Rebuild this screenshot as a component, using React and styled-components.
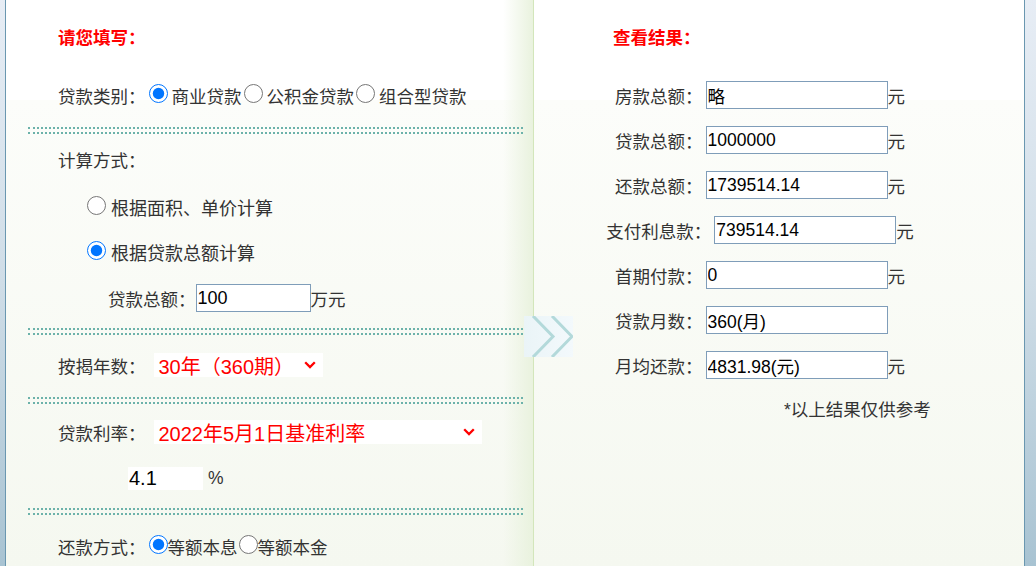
import React from "react";
import styled, { createGlobalStyle } from "styled-components";

const GlobalStyle = createGlobalStyle`
  * { box-sizing: border-box; }
  html, body { margin: 0; padding: 0; background: #fff; }
`;

const Page = styled.div`
  position: relative;
  display: flex;
  width: 1036px;
  height: 566px;
  overflow: hidden;
  background: linear-gradient(to bottom, #ffffff 0, #ffffff 100px, #fcfdfa 100px, #f5f8f0 100%);
  font-family: "Liberation Sans", "Noto Sans CJK SC", sans-serif;
  font-size: 17.5px;
  color: #333;
`;

const Edge = styled.div`
  flex: 0 0 ${(p) => p.$w}px;
  background: linear-gradient(to bottom, #e7edf5 0%, #cfdde7 50%, #a8c3d2 100%);
  border-${(p) => (p.$side === "left" ? "right" : "left")}: 1px solid #6a97b0;
`;

const LeftPanel = styled.div`
  flex: 0 0 528px;
  display: flex;
  flex-direction: column;
  padding-top: 23px;
  border-right: 1px solid #d3e6bb;
  background: linear-gradient(to right, rgba(236, 244, 226, 0) calc(100% - 30px), #e9f2de 100%);
`;

const RightPanel = styled.div`
  flex: 1;
  display: flex;
  flex-direction: column;
  padding-top: 23px;
`;

const Heading = styled.div`
  height: 31px;
  line-height: 31px;
  padding-left: ${(p) => p.$indent}px;
  color: #ff0000;
  font-weight: bold;
`;

const Row = styled.div`
  display: flex;
  align-items: center;
  height: ${(p) => p.$h || 30}px;
  margin-top: ${(p) => p.$mt || 0}px;
  padding-left: ${(p) => p.$indent}px;
  white-space: nowrap;
`;

const Divider = styled.div`
  margin: ${(p) => p.$mt}px 10px 0 22px;
  height: 7px;
  border-top: 2px dotted #6cb2aa;
  border-bottom: 2px dotted #6cb2aa;
`;

const Radio = styled.input.attrs({ type: "radio" })`
  width: 19px;
  height: 19px;
  margin: 0 0 4px ${(p) => p.$ml ?? 3}px;
  flex: 0 0 auto;
  accent-color: #0075ff;
`;

const OptionText = styled.span`
  margin-left: ${(p) => p.$gap || 0}px;
  font-size: ${(p) => p.$size || 17.5}px;
`;

const TextInput = styled.input.attrs({ type: "text", readOnly: true })`
  width: ${(p) => p.$w}px;
  height: ${(p) => p.$h || 28}px;
  margin-left: ${(p) => p.$ml || 0}px;
  padding: 0 0 0 1px;
  border: ${(p) => (p.$plain ? "none" : "1px solid #7f9db9")};
  background: #fff;
  font-family: "Liberation Sans", "Noto Sans CJK SC", sans-serif;
  font-size: ${(p) => p.$size || 17.5}px;
  color: #000;
  outline: none;
`;

const Unit = styled.span`
  margin-left: ${(p) => p.$ml || 0}px;
  visibility: ${(p) => (p.$hidden ? "hidden" : "visible")};
`;

const Select = styled.div`
  display: flex;
  align-items: center;
  justify-content: space-between;
  width: ${(p) => p.$w}px;
  height: 24px;
  margin-left: 8px;
  padding: 0 7px 0 5px;
  background: #fff;
  color: #ff0000;
  font-size: 20px;
`;

const Chevron = () => (
  <svg width="12" height="8" viewBox="0 0 12 8">
    <polyline points="1.2,1.2 6,6 10.8,1.2" fill="none" stroke="#ff0000" strokeWidth="2.3" />
  </svg>
);

const ResultList = styled.div`
  display: flex;
  flex-direction: column;
  gap: 17px;
  width: 452px;
  margin-top: 27px;
`;

const ResultRow = styled.div`
  display: flex;
  align-items: center;
  justify-content: center;
  height: 28px;
  white-space: nowrap;
`;

const Note = styled.div`
  height: 30px;
  line-height: 30px;
  margin-top: 16px;
  padding-left: 250px;
`;

const Arrow = styled.div`
  position: absolute;
  left: 524px;
  top: 316px;
  width: 49px;
  height: 41px;
  background: linear-gradient(to right, #eaf4f7, #f3f9fc);
  z-index: 2;
`;

const results = [
  { label: "房款总额：", value: "略" },
  { label: "贷款总额：", value: "1000000" },
  { label: "还款总额：", value: "1739514.14" },
  { label: "支付利息款：", value: "739514.14" },
  { label: "首期付款：", value: "0" },
  { label: "贷款月数：", value: "360(月)", noUnit: true },
  { label: "月均还款：", value: "4831.98(元)" },
];

export default function App() {
  return (
    <>
      <GlobalStyle />
      <Page>
        <Edge $side="left" $w={6} />
        <LeftPanel>
          <Heading $indent={52}>请您填写：</Heading>
          <Row $mt={26} $indent={52}>
            贷款类别：
            <Radio name="type" defaultChecked />
            <OptionText $gap={4}>商业贷款</OptionText>
            <Radio name="type" $ml={2} />
            <OptionText $gap={4}>公积金贷款</OptionText>
            <Radio name="type" $ml={2} />
            <OptionText $gap={4}>组合型贷款</OptionText>
          </Row>
          <Divider $mt={17} />
          <Row $mt={10} $indent={52}>计算方式：</Row>
          <Row $mt={18} $indent={81}>
            <Radio name="calc" $ml={0} />
            <OptionText $gap={5} $size={18}>根据面积、单价计算</OptionText>
          </Row>
          <Row $mt={15} $indent={81}>
            <Radio name="calc" $ml={0} defaultChecked />
            <OptionText $gap={5} $size={18}>根据贷款总额计算</OptionText>
          </Row>
          <Row $mt={17} $h={28} $indent={102}>
            贷款总额：
            <TextInput $w={115} $size={18} defaultValue="100" />
            万元
          </Row>
          <Divider $mt={16} />
          <Row $mt={15} $indent={52}>
            按揭年数：
            <Select $w={169}>
              <span>30年（360期）</span>
              <Chevron />
            </Select>
          </Row>
          <Divider $mt={17} />
          <Row $mt={13} $indent={52}>
            贷款利率：
            <Select $w={328}>
              <span>2022年5月1日基准利率</span>
              <Chevron />
            </Select>
          </Row>
          <Row $mt={16} $indent={122}>
            <TextInput $plain $w={75} $h={23} $size={20} defaultValue="4.1" />
            <Unit $ml={5}>%</Unit>
          </Row>
          <Divider $mt={15} />
          <Row $mt={16} $indent={52}>
            还款方式：
            <Radio name="pay" defaultChecked />
            <OptionText>等额本息</OptionText>
            <Radio name="pay" $ml={1} />
            <OptionText>等额本金</OptionText>
          </Row>
        </LeftPanel>
        <RightPanel>
          <Heading $indent={79}>查看结果：</Heading>
          <ResultList>
            {results.map((r) => (
              <ResultRow key={r.label}>
                {r.label}
                <TextInput $w={182} $ml={3} defaultValue={r.value} />
                <Unit $hidden={r.noUnit}>元</Unit>
              </ResultRow>
            ))}
          </ResultList>
          <Note>*以上结果仅供参考</Note>
        </RightPanel>
        <Edge $side="right" $w={12} />
        <Arrow>
          <svg width="49" height="41" viewBox="0 0 49 41">
            <polyline points="9,0 29,20.5 9,41" fill="none" stroke="#b3d9da" strokeWidth="3" />
            <polyline points="28,0 48,20.5 28,41" fill="none" stroke="#b3d9da" strokeWidth="3" />
          </svg>
        </Arrow>
      </Page>
    </>
  );
}
